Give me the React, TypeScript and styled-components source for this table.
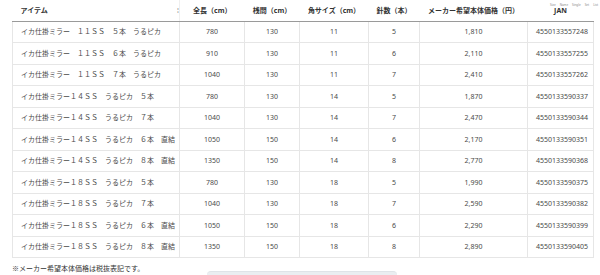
import styled, { createGlobalStyle } from "styled-components";

type Item = {
  name: string;
  length: number;
  span: number;
  size: number;
  hooks: number;
  price: string;
  jan: string;
};

const items: Item[] = [
  { name: "イカ仕掛ミラー　１１ＳＳ　５本　うるピカ", length: 780, span: 130, size: 11, hooks: 5, price: "1,810", jan: "4550133557248" },
  { name: "イカ仕掛ミラー　１１ＳＳ　６本　うるピカ", length: 910, span: 130, size: 11, hooks: 6, price: "2,110", jan: "4550133557255" },
  { name: "イカ仕掛ミラー　１１ＳＳ　７本　うるピカ", length: 1040, span: 130, size: 11, hooks: 7, price: "2,410", jan: "4550133557262" },
  { name: "イカ仕掛ミラー１４ＳＳ　うるピカ　５本", length: 780, span: 130, size: 14, hooks: 5, price: "1,870", jan: "4550133590337" },
  { name: "イカ仕掛ミラー１４ＳＳ　うるピカ　７本", length: 1040, span: 130, size: 14, hooks: 7, price: "2,470", jan: "4550133590344" },
  { name: "イカ仕掛ミラー１４ＳＳ　うるピカ　６本　直結", length: 1050, span: 150, size: 14, hooks: 6, price: "2,170", jan: "4550133590351" },
  { name: "イカ仕掛ミラー１４ＳＳ　うるピカ　８本　直結", length: 1350, span: 150, size: 14, hooks: 8, price: "2,770", jan: "4550133590368" },
  { name: "イカ仕掛ミラー１８ＳＳ　うるピカ　５本", length: 780, span: 130, size: 18, hooks: 5, price: "1,990", jan: "4550133590375" },
  { name: "イカ仕掛ミラー１８ＳＳ　うるピカ　７本", length: 1040, span: 130, size: 18, hooks: 7, price: "2,590", jan: "4550133590382" },
  { name: "イカ仕掛ミラー１８ＳＳ　うるピカ　６本　直結", length: 1050, span: 150, size: 18, hooks: 6, price: "2,290", jan: "4550133590399" },
  { name: "イカ仕掛ミラー１８ＳＳ　うるピカ　８本　直結", length: 1350, span: 150, size: 18, hooks: 8, price: "2,890", jan: "4550133590405" },
];

const columns = [
  { label: "全長（cm）", width: 65 },
  { label: "桟間（cm）", width: 55 },
  { label: "角サイズ（cm）", width: 69 },
  { label: "針数（本）", width: 51 },
  { label: "メーカー希望本体価格（円）", width: 108 },
  { label: "JAN", width: 66 },
];

const App = () => {
  return (
    <>
      <GlobalStyle />
      <Page>
        <Toolbar>
          <span>Size</span>
          <span>Name</span>
          <span>Single</span>
          <span>Set</span>
          <span>List</span>
        </Toolbar>
        <Table>
          <colgroup>
            <col style={{ width: 167 }} />
            {columns.map((c) => (
              <col key={c.label} style={{ width: c.width }} />
            ))}
          </colgroup>
          <thead>
            <tr>
              <HeadCell $left>
                アイテム
                <Grip>⁞</Grip>
              </HeadCell>
              {columns.map((c) => (
                <HeadCell key={c.label}>{c.label}</HeadCell>
              ))}
            </tr>
          </thead>
          <tbody>
            {items.map((it) => (
              <Row key={it.jan}>
                <Cell $left>{it.name}</Cell>
                <Cell>{it.length}</Cell>
                <Cell>{it.span}</Cell>
                <Cell>{it.size}</Cell>
                <Cell>{it.hooks}</Cell>
                <Cell>{it.price}</Cell>
                <Cell>{it.jan}</Cell>
              </Row>
            ))}
          </tbody>
        </Table>
        <Note>※メーカー希望本体価格は税抜表記です。</Note>
        <MoreBar />
      </Page>
    </>
  );
};

export default App;

// STYLED COMPONENTS

const GlobalStyle = createGlobalStyle`
  html, body {
    margin: 0;
    padding: 0;
    background: #ffffff;
    overflow: hidden;
  }
  body {
    font-family: "Noto Sans", "Noto Sans CJK JP", sans-serif;
    color: #3a3a3a;
  }
`;

const Page = styled.div`
  position: relative;
  width: 600px;
  height: 275px;
  padding-left: 12px;
  box-sizing: border-box;
  overflow: hidden;
`;

const Toolbar = styled.div`
  position: absolute;
  top: 3px;
  right: 2px;
  display: flex;
  gap: 4px;
  font-size: 3px;
  line-height: 4px;
  color: #8a8a8a;
`;

const Table = styled.table`
  width: 581px;
  table-layout: fixed;
  border-collapse: collapse;
  font-size: 7px;
  line-height: 9px;
`;

const HeadCell = styled.th<{ $left?: boolean }>`
  position: relative;
  height: 21px;
  padding: 0 8px;
  box-sizing: border-box;
  font-weight: 700;
  color: #333333;
  text-align: ${(p) => (p.$left ? "left" : "center")};
  white-space: nowrap;
  border-bottom: 1px solid #9a9a9a;
  border-right: ${(p) => (p.$left ? "1px solid #efefef" : "none")};
`;

const Grip = styled.span`
  position: absolute;
  right: 0;
  top: 6px;
  font-size: 7px;
  font-weight: 400;
  color: #9a9a9a;
`;

const Row = styled.tr`
  height: 21.5px;
`;

const Cell = styled.td<{ $left?: boolean }>`
  padding: 0 8px;
  box-sizing: border-box;
  text-align: ${(p) => (p.$left ? "left" : "center")};
  white-space: nowrap;
  color: #4a4a4a;
  border: 1px solid #e6e6e6;
`;

const Note = styled.div`
  margin-top: 6px;
  font-family: "Noto Sans CJK JP", sans-serif;
  font-size: 7px;
  line-height: 9px;
  color: #333333;
`;

const MoreBar = styled.div`
  margin: -2px 0 0 195px;
  width: 190px;
  height: 12px;
  border-radius: 4px;
  border-top: 1px solid #dfe4e8;
  background: #eaeef1;
`;
